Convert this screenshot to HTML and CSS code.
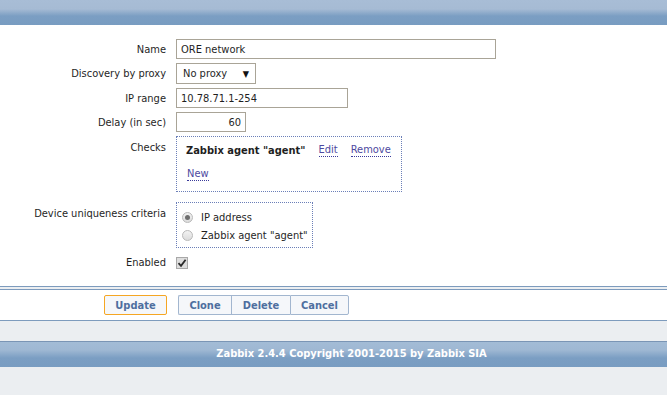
FILE: index.html
```html
<!DOCTYPE html>
<html lang="en">
<head>
  <meta charset="UTF-8" />
  <title>Discovery rules</title>
  <link rel="stylesheet" href="styles.css">
</head>
<body>
  <div class="top-bar"></div>

  <form class="form">
    <div class="row">
      <label class="label">Name</label>
      <input class="text wide" type="text" value="ORE network" />
    </div>
    <div class="row">
      <label class="label">Discovery by proxy</label>
      <div class="select">No proxy <span class="arrow">&#9660;</span></div>
    </div>
    <div class="row">
      <label class="label">IP range</label>
      <input class="text medium" type="text" value="10.78.71.1-254" />
    </div>
    <div class="row">
      <label class="label">Delay (in sec)</label>
      <input class="text short" type="text" value="60" />
    </div>
    <div class="row top gap-checks">
      <label class="label">Checks</label>
      <div class="box checks">
        <div class="check-line">
          <b>Zabbix agent "agent"</b>
          <a class="link">Edit</a>
          <a class="link">Remove</a>
        </div>
        <a class="link new">New</a>
      </div>
    </div>
    <div class="row top gap-unique">
      <label class="label">Device uniqueness criteria</label>
      <div class="box unique">
        <div class="radio-line"><span class="radio on"></span>IP address</div>
        <div class="radio-line"><span class="radio"></span>Zabbix agent "agent"</div>
      </div>
    </div>
    <div class="row gap-enabled">
      <label class="label">Enabled</label>
      <span class="checkbox">
        <svg width="10" height="10" viewBox="0 0 10 10"><path d="M1.5 5.2 L4 7.8 L8.6 1.8" fill="none" stroke="#2b2b2b" stroke-width="1.8"/></svg>
      </span>
    </div>
  </form>

  <div class="button-bar">
    <button class="btn main" type="button">Update</button>
    <div class="btn-group">
      <button class="btn" type="button">Clone</button>
      <button class="btn" type="button">Delete</button>
      <button class="btn" type="button">Cancel</button>
    </div>
  </div>

  <div class="footer">Zabbix 2.4.4 Copyright 2001-2015 by Zabbix SIA</div>
</body>
</html>
```

FILE: styles.css
```css
body {
  margin: 0;
  background-color: #ebeef1;
  font-family: "DejaVu Sans Condensed", "DejaVu Sans", sans-serif;
  font-size: 11px;
  color: #1f1f1f;
}

.top-bar {
  height: 25px;
  background: linear-gradient(to bottom, #a8bdd6 0, #a6bbd4 9px, #7b9ec3 16px, #789cc1 25px);
}

/* Form */
.form {
  background: #fff;
  padding: 14px 0 13px;
  border-bottom: 1px solid #7d9bbd;
}
.row {
  display: flex;
  align-items: center;
  margin-bottom: 4px;
}
.row.top {
  align-items: flex-start;
}
.gap-checks { margin-top: 1px; }
.gap-unique { margin-top: 10px; }
.gap-enabled { margin-top: 8px; }
.label {
  width: 176px;
  flex-shrink: 0;
  text-align: right;
  padding-right: 10px;
  box-sizing: border-box;
}
.row.top .label {
  padding-top: 5px;
}

.text {
  font: inherit;
  color: #1f1f1f;
  height: 20px;
  box-sizing: border-box;
  border: 1px solid #a9a497;
  padding: 0 4px;
  margin: 0;
  outline: none;
}
.wide { width: 320px; }
.medium { width: 172px; }
.short { width: 70px; text-align: right; }

.select {
  width: 80px;
  height: 21px;
  box-sizing: border-box;
  border: 1px solid #a9a497;
  padding: 0 6px;
  display: flex;
  align-items: center;
  justify-content: space-between;
}
.arrow {
  font-size: 9px;
  color: #111;
}

.box {
  border: 1px dotted #6b7fb8;
  box-sizing: border-box;
  flex-shrink: 0;
}
.checks {
  width: 226px;
  height: 56px;
  padding: 6px 9px;
}
.check-line {
  display: flex;
  align-items: center;
  height: 14px;
  white-space: nowrap;
}
.check-line b {
  margin-right: 13px;
}
.link {
  color: #4e4aa0;
  border-bottom: 1px dotted #3a3a9a;
  margin-right: 13px;
  cursor: pointer;
}
.new {
  display: inline-block;
  margin-top: 10px;
  margin-left: 1px;
}

.unique {
  width: 137px;
  height: 46px;
  padding: 5px 4px;
  white-space: nowrap;
}
.radio-line {
  display: flex;
  align-items: center;
  height: 18px;
}
.radio {
  width: 11px;
  height: 11px;
  border-radius: 50%;
  box-sizing: border-box;
  border: 1px solid #b9b9b9;
  background: linear-gradient(#f2f2f2, #dcdcdc);
  margin: 0 8px 0 1px;
  position: relative;
}
.radio.on::after {
  content: "";
  position: absolute;
  left: 2px;
  top: 2px;
  width: 5px;
  height: 5px;
  border-radius: 50%;
  background: #6e6e6e;
}

.checkbox {
  width: 12px;
  height: 12px;
  box-sizing: border-box;
  border: 1px solid #a8a8a8;
  background: #dedede;
  display: flex;
  align-items: center;
  justify-content: center;
}

/* Buttons */
.button-bar {
  background: #fff;
  margin-top: 2px;
  border-top: 1px solid #7d9bbd;
  border-bottom: 1px solid #7d9bbd;
  padding: 5px 0 5px 104px;
  display: flex;
  gap: 11px;
}
.btn {
  font: inherit;
  font-weight: bold;
  color: #4f6f9f;
  background: #f5f7fa;
  border: 1px solid #a2b6cf;
  border-radius: 2px;
  height: 20px;
  padding: 0;
  margin: 0;
  cursor: pointer;
}
.main {
  width: 63px;
  border-color: #f5a623;
}
.btn-group {
  display: flex;
}
.btn-group .btn {
  width: 59px;
  border-radius: 0;
  border-right-width: 0;
}
.btn-group .btn:first-child { width: 53px; border-radius: 2px 0 0 2px; }
.btn-group .btn:last-child { border-right-width: 1px; border-radius: 0 2px 2px 0; }

/* Footer */
.footer {
  margin-top: 20px;
  height: 26px;
  box-sizing: border-box;
  border-top: 1px solid #7a95b5;
  background: linear-gradient(to bottom, #a3bcd6 0, #9fb8d3 8px, #7b9ec3 16px, #789cc1 26px);
  color: #fff;
  font-weight: bold;
  text-align: center;
  line-height: 24px;
  padding-left: 36px;
}
```
